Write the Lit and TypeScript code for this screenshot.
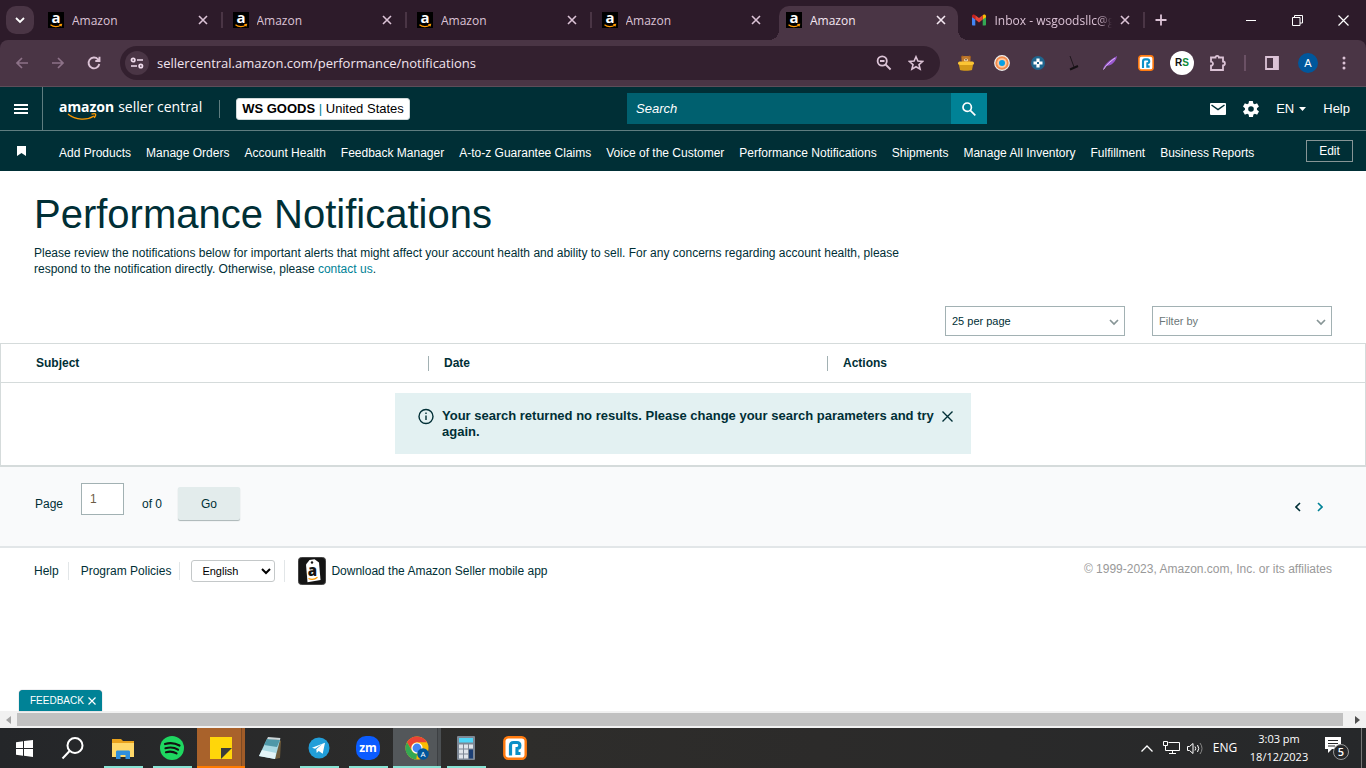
import { LitElement, html, css, svg, nothing } from "lit";
import { customElement, property } from "lit/decorators.js";
import { classMap } from "lit/directives/class-map.js";

const closeIcon = html`<svg width="10" height="10" viewBox="0 0 10 10" fill="none" stroke="currentColor" stroke-width="1.6" aria-hidden="true"><path d="M1 1l8 8M9 1L1 9"/></svg>`;

const amazonFavicon = html`<svg width="16" height="16" viewBox="0 0 16 16" overflow="visible" aria-hidden="true">
  <rect width="16" height="16" fill="#000"/>
  <text x="8" y="11" text-anchor="middle" font-family="Open Sans, sans-serif" font-weight="700" font-size="15" fill="#fff">a</text>
  <path d="M2.500 12.800c3 2.400 7.500 2.400 10.500.2M11.300 12.600l2.200-.2-.5 2" fill="none" stroke="#f90" stroke-width="1.200"/>
</svg>`;

const gmailIcon = html`<svg width="16" height="16" viewBox="0 0 16 16" aria-hidden="true">
  <path d="M1 4v8.500c0 .5.4 1 1 1h2.300V7z" fill="#4285f4"/><path d="M15 4v8.500c0 .5-.4 1-1 1h-2.300V7z" fill="#34a853"/>
  <path d="M1 4.200C1 2.600 2.700 2 3.800 2.900L4.300 3.300V7.600L1 5.200z" fill="#c5221f"/>
  <path d="M15 4.200c0-1.600-1.700-2.200-2.800-1.300l-.5.4v4.300L15 5.200z" fill="#fbbc04"/>
  <path d="M4.300 3.300L8 6.100l3.700-2.800v4.300L8 10.400 4.300 7.600z" fill="#ea4335"/>
</svg>`;

const rBadge = (size: number) => html`<svg width=${size} height=${size} viewBox="0 0 24 24" aria-hidden="true">
  <rect x="1.300" y="1.300" width="21.400" height="21.400" rx="4" fill="#fff" stroke="#ff7a0f" stroke-width="2.400"/>
  <path d="M7.500 19.500V10C7.500 7.500 8 6.500 10.500 6.500H14c3.800 0 3.800 6 0 6h-1.500M14 13v4.500h3.500" fill="none" stroke="#0b8fc7" stroke-width="3.200"/>
</svg>`;

@customElement("browser-tab")
class BrowserTab extends LitElement {
  @property() label = "";
  @property() icon = "amazon";
  @property({ type: Boolean, reflect: true }) active = false;
  @property({ type: Boolean, reflect: true }) divided = false;
  static styles = css`
    :host { flex: 1 1 0; min-width: 0; display: flex; position: relative; color: #dcc3d6; font: 12px/16px "Open Sans", sans-serif; }
    .tab { flex: 1; min-width: 0; display: flex; align-items: center; gap: 8px; margin: 6px 3px 0; padding: 0 12px 6px 7px; border-radius: 10px 10px 0 0; }
    :host([active]) .tab { background: #4a3545; color: #f5e8f2; position: relative; }
    :host([active]) .tab::before, :host([active]) .tab::after { content: ""; position: absolute; bottom: 0; width: 10px; height: 10px; }
    :host([active]) .tab::before { left: -10px; background: radial-gradient(circle at 0 0, #2d1b2a 10px, #4a3545 10px); }
    :host([active]) .tab::after { right: -10px; background: radial-gradient(circle at 100% 0, #2d1b2a 10px, #4a3545 10px); }
    :host([divided])::after { content: ""; position: absolute; right: 0; top: 12px; width: 2px; height: 16px; background: #4a3545; }
    .icon { display: flex; }
    .label { flex: 1; min-width: 0; padding-top: 2px; white-space: nowrap; overflow: hidden; }
    .faded { -webkit-mask-image: linear-gradient(90deg, #000 88%, transparent); mask-image: linear-gradient(90deg, #000 88%, transparent); }
    button { border: 0; background: none; color: inherit; padding: 0; display: flex; }
  `;
  render() {
    return html`<div class="tab">
      <span class="icon">${this.icon === "gmail" ? gmailIcon : amazonFavicon}</span>
      <span class=${classMap({ label: true, faded: this.icon === "gmail" })}>${this.label}</span>
      <button aria-label="Close tab">${closeIcon}</button>
    </div>`;
  }
}

@customElement("browser-chrome")
class BrowserChrome extends LitElement {
  static styles = css`
    :host { display: block; background: #2d1b2a; font-family: "Open Sans", sans-serif; color: #dcc3d6; }
    button { border: 0; background: none; color: inherit; padding: 0; display: grid; place-items: center; }
    svg { display: block; }
    .strip { display: flex; height: 40px; }
    .switch { width: 28px; height: 28px; margin: 6px 4px 0 6px; border-radius: 10px; background: #4a3545; color: #fff; }
    .tabs { flex: 0 1 1107px; display: flex; min-width: 0; }
    .plus { width: 32px; }
    .window { margin-left: auto; display: flex; color: #fff; }
    .window button { width: 46px; }
    .bar { display: flex; align-items: center; height: 46px; border-bottom: 1px solid #5d4d59; background: #4a3545; border-radius: 8px 8px 0 0; padding: 0 4px; }
    .bar > button { width: 36px; height: 36px; }
    .dim { color: #8d7288; }
    .address { flex: 1; display: flex; align-items: center; height: 34px; margin: 0 8px; border-radius: 17px; background: #33202f; padding: 0 8px 0 5px; }
    .site { width: 24px; height: 24px; border-radius: 50%; background: #4a3545; color: #f0dced; }
    .address input { flex: 1; min-width: 0; border: 0; background: none; outline: 0; padding: 0 8px; font: 13px/20px "Open Sans", sans-serif; color: #f1e4ee; }
    .address .act { width: 32px; height: 32px; }
    .rule { width: 2px; height: 16px; background: #6b5165; margin: 0 8px; }
    .rs { width: 24px; height: 24px; border-radius: 50%; background: #fff; color: #111; font: bold 10px/24px "Liberation Sans", sans-serif; text-align: center; }
    .rs i { font-style: normal; color: #0a8a3a; }
    .avatar { width: 20px; height: 20px; border-radius: 50%; background: #00579c; color: #fff; font-size: 11px; line-height: 20px; text-align: center; }
  `;
  render() {
    return html`
      <div class="strip">
        <button class="switch" aria-label="Search tabs"><svg width="10" height="10" viewBox="0 0 10 10" fill="none" stroke="currentColor" stroke-width="1.800"><path d="M1 3l4 4 4-4"/></svg></button>
        <div class="tabs">
          ${[true, true, true, false].map((d) => html`<browser-tab label="Amazon" ?divided=${d}></browser-tab>`)}
          <browser-tab label="Amazon" active></browser-tab>
          <browser-tab label="Inbox - wsgoodsllc@gmail.com" icon="gmail" divided></browser-tab>
        </div>
        <button class="plus" aria-label="New tab"><svg width="12" height="12" viewBox="0 0 12 12" stroke="currentColor" stroke-width="1.800"><path d="M6 .5v11M.5 6h11"/></svg></button>
        <div class="window">
          <button aria-label="Minimize"><svg width="10" height="10" viewBox="0 0 10 10" stroke="currentColor"><path d="M0 5.500h10"/></svg></button>
          <button aria-label="Restore"><svg width="11" height="11" viewBox="0 0 11 11" fill="none" stroke="currentColor"><path d="M.5 2.500h7.500v8H.5zM2.500 2.500v-2h8v7.500H8"/></svg></button>
          <button aria-label="Close"><svg width="11" height="11" viewBox="0 0 11 11" stroke="currentColor" stroke-width="1.200"><path d="M.5.5l10 10M10.500.5l-10 10"/></svg></button>
        </div>
      </div>
      <div class="bar">
        <button class="dim" aria-label="Back"><svg width="14" height="14" viewBox="0 0 14 14" fill="none" stroke="currentColor" stroke-width="1.700"><path d="M13 7H2M7 2L2 7l5 5"/></svg></button>
        <button class="dim" aria-label="Forward"><svg width="14" height="14" viewBox="0 0 14 14" fill="none" stroke="currentColor" stroke-width="1.700"><path d="M1 7h11M7 2l5 5-5 5"/></svg></button>
        <button aria-label="Reload"><svg width="14" height="14" viewBox="0 0 14 14" fill="none" stroke="currentColor" stroke-width="1.900"><path d="M12.300 8A5.400 5.400 0 1 1 11 3.300L12.500 5M12.500.8V5H8.300"/></svg></button>
        <div class="address">
          <button class="site" aria-label="Site information"><svg width="14" height="12" viewBox="0 0 14 12" fill="none" stroke="currentColor" stroke-width="1.700"><circle cx="3.200" cy="3" r="1.700"/><path d="M7 3h6M1 9h6"/><circle cx="10.800" cy="9" r="1.700"/></svg></button>
          <input aria-label="Address" .value=${"sellercentral.amazon.com/performance/notifications"}>
          <button class="act" aria-label="Zoom"><svg width="16" height="16" viewBox="0 0 16 16" fill="none" stroke="currentColor" stroke-width="1.800"><circle cx="6.200" cy="6" r="4.600"/><path d="M9.600 9.500l5 5M4 6h4.500"/></svg></button>
          <button class="act" aria-label="Bookmark"><svg width="16" height="16" viewBox="0 0 16 16" fill="none" stroke="currentColor" stroke-width="1.600"><path d="M8 1.800l1.900 4.300 4.700.4-3.600 3.100 1.100 4.600L8 11.800l-4.100 2.400L5 9.600 1.400 6.500l4.700-.4z"/></svg></button>
        </div>
        <button aria-label="Honey pot"><svg width="16" height="16" viewBox="0 0 16 16"><circle cx="4.500" cy="2" r="1.500" fill="#9b5b1d"/><circle cx="11.500" cy="2" r="1.500" fill="#9b5b1d"/><rect x="3.500" y="1" width="9" height="7" rx="3" fill="#bd762b"/><ellipse cx="8" cy="5" rx="2" ry="1.600" fill="#f8dfb3"/><circle cx="8" cy="4.700" r=".7" fill="#2b1506"/><rect y="6.500" width="16" height="3.500" rx="1.700" fill="#fbc534"/><path d="M1 10h14l-1 5c-1 1-11 1-12 0z" fill="#d59a18"/></svg></button>
        <button aria-label="Location tool"><svg width="16" height="16" viewBox="0 0 16 16"><circle cx="8" cy="8" r="7.300" fill="#f28b4b" stroke="#eee" stroke-width="1.200"/><circle cx="8" cy="8" r="4.800" fill="#ffc9a0"/><circle cx="8" cy="8" r="3" fill="#07a0e5"/></svg></button>
        <button aria-label="Cross tool"><svg width="14" height="14" viewBox="0 0 14 14"><circle cx="7" cy="7" r="7" fill="#1f668e"/><path d="M7 2.500v9M2.500 7h9" stroke="#fff" stroke-width="3.200"/><path d="M6 6h2v2H6z" fill="#1f668e"/></svg></button>
        <button aria-label="Broom"><svg width="14" height="16" viewBox="0 0 14 16" stroke="#151014"><path d="M3 1l4 11" stroke-width=".8"/><path d="M3 14.500l8-3.500" stroke-width="2"/></svg></button>
        <button aria-label="Feather"><svg width="16" height="16" viewBox="0 0 16 16"><path d="M1 15C2 9 8 5 15 1c-1 6-6 10-11 10z" fill="#9b59d0"/><path d="M1.500 14.500C5 9 9 6 13 3" stroke="#dcb8f5" fill="none"/></svg></button>
        <button aria-label="R extension">${rBadge(16)}</button>
        <button aria-label="RS extension"><span class="rs">R<i>S</i></span></button>
        <button aria-label="Extensions"><svg width="18" height="18" viewBox="0 0 18 18" fill="none" stroke="currentColor" stroke-width="1.800"><path d="M2 3.500h4.500a1.700 1.700 0 0 1 3.400 0H14v4a1.900 1.900 0 0 1 0 3.800V16H2v-4.300a2 2 0 0 0 0-4z"/></svg></button>
        <span class="rule"></span>
        <button aria-label="Side panel"><svg width="14" height="14" viewBox="0 0 14 14"><path d="M1 1h12v12H1z" fill="none" stroke="currentColor" stroke-width="1.800"/><path d="M8 1h5v12H8z" fill="currentColor"/></svg></button>
        <button aria-label="Profile"><span class="avatar">A</span></button>
        <button aria-label="Menu"><svg width="4" height="14" viewBox="0 0 4 14" fill="currentColor"><circle cx="2" cy="2" r="1.500"/><circle cx="2" cy="7" r="1.500"/><circle cx="2" cy="12" r="1.500"/></svg></button>
      </div>`;
  }
}

const navItems = ["Add Products", "Manage Orders", "Account Health", "Feedback Manager", "A-to-z Guarantee Claims", "Voice of the Customer", "Performance Notifications", "Shipments", "Manage All Inventory", "Fulfillment", "Business Reports"];

@customElement("seller-header")
class SellerHeader extends LitElement {
  static styles = css`
    :host { display: block; background: #002f36; color: #fff; font: 13px/16px "Liberation Sans", Arial, sans-serif; }
    a { color: inherit; text-decoration: none; white-space: nowrap; }
    button { border: 0; background: none; color: inherit; padding: 0; font: inherit; display: grid; place-items: center; }
    svg { display: block; }
    .top { display: grid; grid-template-columns: minmax(0, 1fr) 360px 379px; align-items: center; height: 43px; border-bottom: 1px solid #5f7d80; }
    .left { display: flex; align-items: center; align-self: stretch; }
    .burger { width: 42px; height: 43px; border-right: 1px solid #5f7d80; box-sizing: content-box; }
    .logo { position: relative; margin-left: 16px; padding-bottom: 4px; display: flex; gap: 4px; font: 14px/20px "Open Sans", sans-serif; }
    .logo b { font-weight: 700; font-family: "Noto Sans", sans-serif; }
    .logo svg { position: absolute; left: 8px; top: 15px; }
    .bar { width: 1px; height: 18px; background: #5f7d80; margin: 0 16px 0 17px; }
    .account { background: #fff; color: #000; border: 1px solid #cfd8d9; border-radius: 3px; padding: 2px 5px; white-space: nowrap; }
    .account i { font-style: normal; color: #008296; }
    .search { display: flex; height: 31px; }
    .search input { flex: 1; min-width: 0; border: 0; outline: 0; background: #00606f; color: #fff; padding: 0 9px; font: italic 13px/16px "Liberation Sans", Arial, sans-serif; }
    .search input::placeholder { color: #fff; opacity: 1; }
    .search button { width: 36px; background: #008296; }
    .right { display: flex; justify-content: flex-end; align-items: center; padding-right: 16px; gap: 17px; }
    .lang { display: flex; align-items: center; gap: 5px; }
    .nav { display: flex; align-items: center; height: 40px; padding: 0 13px 0 17px; font-size: 12px; }
    .links { display: flex; flex: 1; gap: 15px; margin-left: 33px; padding-top: 4px; }
    .edit { width: 47px; height: 22px; border: 1px solid #879596; }
  `;
  render() {
    return html`
      <div class="top">
        <div class="left">
          <button class="burger" aria-label="Menu"><svg width="14" height="10" viewBox="0 0 14 10" stroke="#fff" stroke-width="2"><path d="M0 1h14M0 5h14M0 9h14"/></svg></button>
          <a class="logo" href="#" aria-label="amazon seller central"><b>amazon</b><span>seller central</span>
            <svg width="32" height="11" viewBox="0 0 32 11" fill="none" stroke="#f90" stroke-width="1.400"><path d="M1 2c8 6.500 19 6.500 26 2M24.500 2.200c4-1.400 5.500-.4 2.700 3.600"/></svg>
          </a>
          <span class="bar"></span>
          <button class="account"><span><b>WS GOODS</b> <i>|</i> United States</span></button>
        </div>
        <form class="search"><input type="search" placeholder="Search" aria-label="Search"><button type="button" aria-label="Search"><svg width="14" height="14" viewBox="0 0 14 14" fill="none" stroke="#fff" stroke-width="1.700"><circle cx="5.200" cy="5.200" r="4.200"/><path d="M8.300 8.300l5 5"/></svg></button></form>
        <div class="right">
          <a href="#" aria-label="Mail"><svg width="16" height="12" viewBox="0 0 16 12"><rect width="16" height="12" rx="1" fill="#fff"/><path d="M1.500 2L8 6.500 14.500 2" fill="none" stroke="#002f36" stroke-width="1.500"/></svg></a>
          <a href="#" aria-label="Settings"><svg width="16" height="16" viewBox="2 2 20 20"><path fill="#fff" d="M19.400 13a7.500 7.500 0 0 0 0-2l2.200-1.700c.2-.1.200-.4.100-.6l-2-3.500c-.1-.2-.4-.3-.6-.2l-2.600 1a7.600 7.600 0 0 0-1.700-1l-.4-2.600a.5.500 0 0 0-.5-.4h-4a.5.500 0 0 0-.5.4L9 5a7.600 7.600 0 0 0-1.700 1L4.800 5c-.2-.1-.5 0-.6.200l-2 3.500c-.1.200-.1.500.1.600L4.500 11a7.900 7.900 0 0 0 0 2l-2.200 1.700c-.2.1-.2.400-.1.600l2 3.500c.1.200.4.300.6.200l2.600-1a7.600 7.600 0 0 0 1.700 1l.4 2.600c0 .2.200.4.500.4h4c.2 0 .5-.2.5-.4L15 19a7.600 7.600 0 0 0 1.700-1l2.500 1c.2.1.5 0 .6-.2l2-3.500c.1-.2.1-.5-.1-.6zM12 15.500a3.500 3.500 0 1 1 0-7 3.500 3.500 0 0 1 0 7z"/></svg></a>
          <a class="lang" href="#">EN <svg width="7" height="4" viewBox="0 0 7 4" fill="#fff"><path d="M0 0h7L3.500 4z"/></svg></a>
          <a href="#">Help</a>
        </div>
      </div>
      <nav class="nav">
        <svg width="9" height="10" viewBox="0 0 9 10" fill="#fff" aria-hidden="true"><path d="M0 0h9v10L4.500 7 0 10z"/></svg>
        <div class="links">${navItems.map((n) => html`<a href="#">${n}</a>`)}</div>
        <button class="edit">Edit</button>
      </nav>`;
  }
}

@customElement("notifications-page")
class NotificationsPage extends LitElement {
  static styles = css`
    :host { display: block; position: relative; background: #fff; color: #002f36; font: 12px/16px "Liberation Sans", Arial, sans-serif; }
    svg { display: block; }
    a { color: inherit; text-decoration: none; }
    button { font: inherit; color: inherit; border: 0; padding: 0; background: none; }
    h1 { margin: 0; padding: 19px 34px 0; font-size: 40px; line-height: 48px; font-weight: 400; }
    p { margin: 7px 34px 0; max-width: 880px; }
    p a { color: #008296; }
    .filters { display: flex; justify-content: flex-end; gap: 27px; padding: 29px 34px 7px; }
    .filters label { position: relative; display: block; width: 180px; }
    .filters select { appearance: none; display: block; width: 100%; height: 30px; box-sizing: border-box; border: 1px solid #a2b1b3; border-radius: 0; background: #fff; padding: 0 6px 1px; font: 11px/16px "Liberation Sans", Arial, sans-serif; color: #002f36; }
    .filters .muted { color: #6c7778; }
    .filters svg { position: absolute; right: 6px; top: 13px; pointer-events: none; }
    table { width: 100%; border-collapse: collapse; table-layout: fixed; border: 1px solid #d5dbdb; }
    th { text-align: left; height: 38px; padding: 0; border-bottom: 1px solid #d5dbdb; }
    .c1 { width: 427px; } .c2 { width: 399px; }
    th span { display: block; padding-left: 15px; line-height: 15px; border-left: 1px solid #a2b1b3; }
    th:first-child span { padding-left: 35px; border-left: 0; }
    td { padding: 10px 0 11px; }
    .alert { display: flex; width: 576px; max-width: 100%; box-sizing: border-box; margin: 0 auto; background: #e3f1f2; padding: 15px 18px 14px 23px; font: bold 13px/16px "Liberation Sans", Arial, sans-serif; gap: 8px; align-items: flex-start; }
    .alert div { flex: 1; }
    .alert button { padding: 3px 0 0; }
    .pager { display: flex; align-items: center; height: 82px; box-sizing: border-box; background: #f9fafb; border-top: 1px solid #d5dbdb; border-bottom: 2px solid #e2e6e8; padding: 0 43px 6px 35px; }
    .pager label { display: flex; align-items: center; gap: 18px; }
    .pager input { width: 43px; height: 32px; box-sizing: border-box; border: 1px solid #a2b1b3; padding: 0 8px; font: 12px/16px "Liberation Sans", Arial, sans-serif; color: #6b5b45; margin-bottom: 10px; }
    .pager span { margin: 0 16px 0 18px; }
    .go { width: 62px; height: 33px; background: #e3ecec; border-radius: 2px; box-shadow: 0 1px 1px #a9b4b5; }
    .arrows { margin-left: auto; padding-top: 6px; display: flex; gap: 16px; }
    footer { display: flex; align-items: center; padding: 9px 34px 0; }
    .sep { width: 1px; height: 18px; background: #e2e6e8; margin: 0 12px 0 9px; }
    .short { margin-right: 11px; margin-left: 8px; }
    .tall { height: 22px; margin: 0 13px 0 9px; }
    footer select { width: 84px; height: 22px; border: 1px solid #c4c8c9; border-radius: 3px; background: #fff; font: 11px/16px "Liberation Sans", Arial, sans-serif; padding: 0 6px; }
    .app { display: flex; align-items: center; gap: 5px; }
    .copy { margin-left: auto; color: #999; padding-bottom: 4px; }
    .feedback { position: absolute; left: 19px; bottom: 0; display: flex; align-items: center; gap: 4px; padding: 0 6px 0 11px; height: 21px; background: #008296; border-radius: 4px 4px 0 0; color: #fff; font-size: 10px; box-shadow: 0 0 1px #667; }
  `;
  private arrow(active: boolean) {
    return html`<svg width="6" height="10" viewBox="0 0 6 10" fill="none" stroke=${active ? "#008296" : "#002f36"} stroke-width="1.600"><path d=${active ? "M1 1l4 4-4 4" : "M5 1L1 5l4 4"}/></svg>`;
  }
  render() {
    const chevron = html`<svg width="10" height="7" viewBox="0 0 10 7" fill="none" stroke="#879596" stroke-width="1.700"><path d="M1 1l4 4 4-4"/></svg>`;
    return html`
      <h1>Performance Notifications</h1>
      <p>Please review the notifications below for important alerts that might affect your account health and ability to sell. For any concerns regarding account health, please respond to the notification directly. Otherwise, please <a href="#">contact us</a>.</p>
      <div class="filters">
        <label><select aria-label="Results per page"><option>25 per page</option></select>${chevron}</label>
        <label><select class="muted" aria-label="Filter by"><option>Filter by</option></select>${chevron}</label>
      </div>
      <table>
        <thead><tr><th class="c1"><span>Subject</span></th><th class="c2"><span>Date</span></th><th><span>Actions</span></th></tr></thead>
        <tbody><tr><td colspan="3">
          <div class="alert" role="status">
            <svg width="16" height="17" viewBox="0 0 16 17" fill="none" stroke="#002f36" stroke-width="1.400"><circle cx="8" cy="8.500" r="7"/><path d="M8 7.500V12M8 4.500v1.600"/></svg>
            <div>Your search returned no results. Please change your search parameters and try again.</div>
            <button aria-label="Dismiss"><svg width="11" height="11" viewBox="0 0 11 11" stroke="#002f36" stroke-width="1.400"><path d="M.5.5l10 10M10.500.5l-10 10"/></svg></button>
          </div>
        </td></tr></tbody>
      </table>
      <div class="pager">
        <label>Page <input .value=${"1"}></label><span>of 0</span>
        <button class="go">Go</button>
        <div class="arrows"><button aria-label="Previous page">${this.arrow(false)}</button><button aria-label="Next page">${this.arrow(true)}</button></div>
      </div>
      <footer>
        <a href="#">Help</a><i class="sep"></i><a href="#">Program Policies</a><i class="sep short"></i>
        <select aria-label="Language"><option>English</option></select><i class="sep tall"></i>
        <a class="app" href="#"><svg width="28" height="28" viewBox="0 0 28 28" aria-hidden="true"><rect x=".5" y=".5" width="27" height="27" rx="3" fill="#151515" stroke="#444"/><path d="M8 7.500l3.500-4.500 5-.8 4.500 3.300 1.500 17.500-13 2.300z" fill="#fff"/><circle cx="14" cy="5.500" r="1.200" fill="#151515"/><text x="14.500" y="19" text-anchor="middle" font-family="Open Sans, sans-serif" font-weight="800" font-size="15" fill="#151515">a</text><path d="M10.500 21.500c3 1.400 6.500.8 9-1.300" fill="none" stroke="#f90" stroke-width="1.300"/></svg>Download the Amazon Seller mobile app</a>
        <span class="copy">© 1999-2023, Amazon.com, Inc. or its affiliates</span>
      </footer>
      <button class="feedback">FEEDBACK <svg width="8" height="8" viewBox="0 0 8 8" stroke="#fff" stroke-width="1.200"><path d="M.5.5l7 7M7.500.5l-7 7"/></svg></button>`;
  }
}

interface TaskItem { name: string; art: unknown; state?: string; }

const tasks: TaskItem[] = [
  { name: "File Explorer", state: "open", art: svg`<path d="M1 3h9l2 2h11v16H1z" fill="#e9a21c"/><path d="M1 7h22v14H1z" fill="#ffd869"/><path d="M5 23v-7c0-1 .5-1.500 1.500-1.500h11c1 0 1.500.5 1.500 1.500v7h-4.500v-4h-5v4z" fill="#2f8fdc"/>` },
  { name: "Spotify", state: "open", art: svg`<circle cx="12" cy="12" r="12" fill="#1ed760"/><path d="M5 8c5-1.500 10-1 14.500 1.500M5.500 12.200c4.500-1.200 9-.8 12.500 1.400M6 16.200c4-1 7.500-.6 10.500 1.200" fill="none" stroke="#121212" stroke-width="2.200" stroke-linecap="round"/>` },
  { name: "Sticky Notes", state: "alert", art: svg`<path d="M1 1h22v11l-11 11H1z" fill="#ffd60a"/><path d="M12 12h11v11H12z" fill="#ffd60a"/><path d="M12 12h11L12 23z" fill="#3a3a3a"/>` },
  { name: "Notepad", art: svg`<path d="M19 2l4 3-1 17-5 1z" fill="#6d5a3a"/><path d="M9 3L1 20l16 3 5-19z" fill="#a9d9e3"/><path d="M9 3l-3 6 13 2 3-7z" fill="#4e98a8"/><path d="M4 14l-3 6 16 3 1-6z" fill="#e4f4f7"/><path d="M9 3l13 1 .4-2L10 1z" fill="#ccd6d9"/>` },
  { name: "Telegram", state: "open", art: svg`<circle cx="12" cy="12" r="10.500" fill="#229ed9"/><path d="M5 11.800L18 6.800l-2.300 11-4-2.900-2 2-.4-3.700 6-5.200-7.200 4.700z" fill="#fff"/>` },
  { name: "Zoom", state: "open", art: svg`<rect width="24" height="24" rx="10" fill="#0b5cff"/><text x="12" y="16" text-anchor="middle" font-family="Open Sans, sans-serif" font-size="12" font-weight="700" fill="#fff">zm</text>` },
  { name: "Chrome", state: "active", art: svg`<circle cx="12" cy="12" r="11.500" fill="#fbbc04"/><path d="M2 6.200A11.500 11.500 0 0 1 22 6.300H12a5.700 5.700 0 0 0-5 8.500z" fill="#ea4335"/><path d="M2 6.200l5 8.700a5.700 5.700 0 0 0 5 2.800l-.7 5.800A11.500 11.500 0 0 1 2 6.200z" fill="#34a853"/><circle cx="12" cy="12" r="5.600" fill="#fff"/><circle cx="12" cy="12" r="4.400" fill="#4285f4"/><circle cx="18" cy="18" r="5.800" fill="#00579c"/><text x="18" y="21" text-anchor="middle" font-family="Open Sans, sans-serif" font-size="8" fill="#fff">A</text>` },
  { name: "Calculator", state: "open", art: svg`<rect x="3" width="18" height="24" rx="1" fill="#7d8794"/><rect x="5" y="2" width="14" height="4.500" fill="#4fd5f7"/><path d="M5 8.500h4v4H5zM10 8.500h4v4h-4zM15 8.500h4v4h-4zM5 13.500h4v4H5zM10 13.500h4v4h-4zM5 18.500h4v4H5zM10 18.500h4v4h-4z" fill="#dfe4ea"/><path d="M15 13.500h4v9h-4z" fill="#1c3f74"/>` },
];

@customElement("task-bar")
class TaskBar extends LitElement {
  static styles = css`
    :host { display: flex; height: 40px; background: linear-gradient(90deg, #242629, #2e2d2b 38%, #2c2b2a 60%, #26282a); color: #fff; font: 12px/18px "Open Sans", sans-serif; }
    button { border: 0; padding: 0; background: none; color: inherit; font: inherit; display: grid; place-items: center; }
    svg { display: block; }
    .apps { display: flex; gap: 1px; }
    .apps button { width: 48px; box-sizing: border-box; position: relative; }
    .apps .find { padding-right: 1px; margin-right: 1px; }
    .open::after, .active::after, .alert::after { content: ""; position: absolute; left: 5px; right: 4px; bottom: 0; height: 2px; background: #88e3d4; }
    .active { background: linear-gradient(90deg, #53575a 44px, #3d4043 44px, #3d4043 45px, #4b4f52 45px); } .active::after { left: 0; right: 0; }
    .apps .alert { background: linear-gradient(90deg, #a9622b 44px, #7c4a24 44px, #7c4a24 45px, #a05c28 45px); } .alert::after { left: 0; right: 0; background: #ff7a00; }
    .tray { margin-left: auto; display: flex; align-items: center; }
    .tray button { align-self: stretch; width: 24px; }
    .tray .lang { width: 36px; }
    .tray .clock { width: 72px; display: block; text-align: center; font-size: 11px; }
    .tray .notes { width: 44px; margin-right: 2px; }
    .edge { width: 4px; height: 40px; border-left: 1px solid #777; }
  `;
  render() {
    return html`
      <div class="apps">
        <button aria-label="Start"><svg width="17" height="17" viewBox="0 0 17 17" fill="#fff"><path d="M0 2.300l7-1V8H0zM8 1.100L17 0v8H8zM0 9h7v6.700l-7-1zM8 9h9v8l-9-1.200z"/></svg></button>
        <button class="find" aria-label="Search"><svg width="24" height="24" viewBox="0 0 24 24" fill="none" stroke="#fff" stroke-width="2"><circle cx="14" cy="9.500" r="7.500"/><path d="M8.600 15L1.500 22.500"/></svg></button>
        ${tasks.map((t) => html`<button class=${t.state ?? nothing} aria-label=${t.name}><svg width="24" height="24" viewBox="0 0 24 24">${t.art}</svg></button>`)}
        <button aria-label="R app">${rBadge(24)}</button>
      </div>
      <div class="tray">
        <button aria-label="Hidden icons"><svg width="12" height="7" viewBox="0 0 12 7" fill="none" stroke="#fff" stroke-width="1.300"><path d="M.5 6.500L6 1l5.500 5.500"/></svg></button>
        <button aria-label="Network"><svg width="17" height="14" viewBox="0 0 17 14" fill="none" stroke="#fff"><path d="M5.500 1.500h11v8h-11M2.500 4.500v5h4M.5.500h4v4h-4zM9.500 9.500v3M6 12.500h7"/></svg></button>
        <button aria-label="Volume"><svg width="17" height="13" viewBox="0 0 17 13" fill="none" stroke="#fff"><path d="M.5 4.500h2l3.500-3v10l-3.500-3h-2zM8 4.500q1.500 2 0 4M10.500 3q2.500 3.500 0 7"/><path d="M13 1q4 5.500 0 11" stroke="#888"/></svg></button>
        <button class="lang">ENG</button>
        <button class="clock">3:03 pm<br>18/12/2023</button>
        <button class="notes" aria-label="5 notifications"><svg width="26" height="26" viewBox="0 0 26 26"><path d="M1 2h16v12H8l-4 4v-4H1z" fill="#fff"/><path d="M4 5.500h10M4 8.500h10M4 11h7" stroke="#26282a"/><circle cx="17" cy="17" r="7.500" fill="#26282a" stroke="#999"/><text x="17" y="21" text-anchor="middle" font-family="Open Sans, sans-serif" font-size="11" font-weight="600" fill="#fff">5</text></svg></button>
        <span class="edge"></span>
      </div>`;
  }
}

@customElement("app-root")
class AppRoot extends LitElement {
  static styles = css`
    :host { display: flex; flex-direction: column; min-height: 100vh; }
    notifications-page { flex: 1; }
    .scroll { display: flex; align-items: center; gap: 6px; height: 17px; padding: 0 6px; background: #f1f1f1; }
    .thumb { flex: 1; height: 13px; background: #c1c1c1; }
    .last { margin-left: 6px; }
  `;
  render() {
    return html`
      <browser-chrome></browser-chrome>
      <seller-header></seller-header>
      <notifications-page></notifications-page>
      <div class="scroll" aria-hidden="true">
        <svg width="5" height="8" viewBox="0 0 5 8" fill="#a3a3a3"><path d="M5 0v8L0 4z"/></svg>
        <span class="thumb"></span>
        <svg class="last" width="5" height="8" viewBox="0 0 5 8" fill="#505050"><path d="M0 0v8l5-4z"/></svg>
      </div>
      <task-bar></task-bar>`;
  }
}
